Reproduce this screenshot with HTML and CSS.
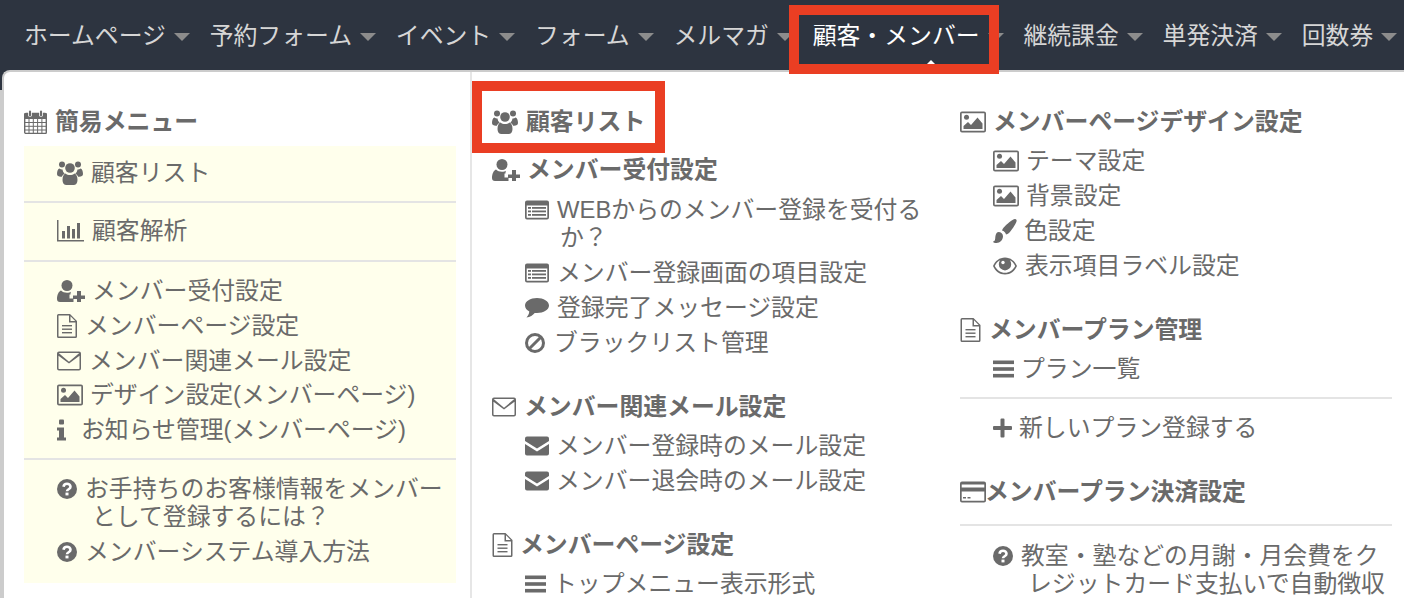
FILE: index.html
```html
<!DOCTYPE html>
<html lang="ja">
<head>
<meta charset="utf-8">
<title>顧客・メンバー</title>
<link rel="stylesheet" href="styles.css">
</head>
<body>
<svg class="sprite" xmlns="http://www.w3.org/2000/svg">
  <symbol id="calendar" viewBox="0 0 23 24"><path d="M2 3.500h19a1.300 1.300 0 0 1 1.300 1.300v17.400a1.300 1.300 0 0 1-1.300 1.300H2A1.300 1.300 0 0 1 .7 22.200V4.800A1.300 1.300 0 0 1 2 3.500z" fill="none" stroke="currentColor" stroke-width="1.400"/><path d="M0 3.500h23v5.500H0z"/><path d="M.7 12.500h21.600M.7 16.300h21.600M.7 20h21.600M5 9v14.500M9.300 9v14.500M13.600 9v14.500M17.900 9v14.500" fill="none" stroke="currentColor" stroke-width="1"/><rect x="4.200" y="0" width="3.600" height="7" rx="1.800" fill="#fff"/><rect x="15.200" y="0" width="3.600" height="7" rx="1.800" fill="#fff"/><rect x="5" y=".5" width="2" height="6" rx="1"/><rect x="16" y=".5" width="2" height="6" rx="1"/></symbol>
  <symbol id="users" viewBox="0 0 26 24"><circle cx="13" cy="7" r="4.800"/><circle cx="5" cy="3.500" r="3"/><circle cx="21" cy="3.500" r="3"/><path d="M0 13c0-3 1-5.500 2.500-5.500 1 .8 2 1.200 3 1 .3 1.800 1 3.200 2.200 4.200-1.300.6-2.300 1.500-2.800 3C2 16 0 15 0 13zM26 13c0-3-1-5.500-2.500-5.500-1 .8-2 1.200-3 1-.3 1.800-1 3.200-2.200 4.200 1.300.6 2.300 1.500 2.800 3 2.900.300 4.900-.700 4.900-2.700z"/><path d="M8.500 12.500c1.200 1 2.800 1.500 4.500 1.500s3.300-.5 4.500-1.500c1.800.5 3 3 3 6.500 0 3-1.500 5-4 5H9.500c-2.500 0-4-2-4-5 0-3.500 1.200-6 3-6.500z"/></symbol>
  <symbol id="chart" viewBox="0 0 27 22"><path d="M0 0h1.500v20H27v1.500H0z"/><rect x="5" y="11" width="3" height="7.500"/><rect x="10" y="6" width="3" height="12.500"/><rect x="15" y="9" width="3" height="9.500"/><rect x="20" y="3" width="3" height="15.500"/></symbol>
  <symbol id="userplus" viewBox="0 0 28 22"><circle cx="10" cy="5.500" r="5.500"/><path d="M4 10.500c1.500 1.500 3.500 2.200 6 2.200 1.500 0 3-.3 4-1-.5 1-.5 2-.5 2.800h-1v4h4V22H3c-2 0-3-1-3-3 0-4 1.500-7.500 4-8.500z"/><path d="M20 11h4v4.500h4v3.500h-4v3h-4v-3h-4v-3.500h4z"/></symbol>
  <symbol id="file" viewBox="0 0 20 24"><path fill-rule="evenodd" d="M1.500 0H13l7 7v15.500a1.500 1.500 0 0 1-1.500 1.500h-17A1.500 1.500 0 0 1 0 22.500v-21A1.500 1.500 0 0 1 1.500 0zm0 1.500v21h17V8.500H12V1.500zm12 .8v4.700h4.700z"/><rect x="5" y="11" width="10" height="1.400"/><rect x="5" y="14.500" width="10" height="1.400"/><rect x="5" y="18" width="10" height="1.400"/></symbol>
  <symbol id="mailo" viewBox="0 0 24 19"><path fill-rule="evenodd" d="M2 0h20a2 2 0 0 1 2 2v15a2 2 0 0 1-2 2H2a2 2 0 0 1-2-2V2a2 2 0 0 1 2-2zM1.500 4.200V17c0 .3.200.5.500.5h20c.3 0 .5-.2.500-.5V4.200L12 12zm.2-2.700L12 10.200 22.300 1.500z"/></symbol>
  <symbol id="picture" viewBox="0 0 26 21"><path fill-rule="evenodd" d="M2 0h22a2 2 0 0 1 2 2v17a2 2 0 0 1-2 2H2a2 2 0 0 1-2-2V2a2 2 0 0 1 2-2zm-.300 1.700v17.600h22.600V1.700z"/><circle cx="6.500" cy="5.800" r="2.500"/><path d="M3.500 17.500v-3l4.500-4 3 3 6.500-7.500 5 6v5.500z"/></symbol>
  <symbol id="info" viewBox="0 0 9 21"><rect x="2" y="0" width="5" height="5" rx="1"/><path d="M0 8h7v10h2v3H0v-3h2v-7H0z"/></symbol>
  <symbol id="question" viewBox="0 0 20 20"><circle cx="10" cy="10" r="10"/><path d="M6.500 7.800c.3-2 1.700-3 3.500-3s3.500 1.100 3.500 2.900c0 2.500-3.500 2.500-3.500 4.500" fill="none" stroke="#fff" stroke-width="2.600"/><rect x="8.500" y="13.600" width="3" height="2.800" fill="#fff"/></symbol>
  <symbol id="listalt" viewBox="0 0 24 19"><path fill-rule="evenodd" d="M2 0h20a2 2 0 0 1 2 2v15a2 2 0 0 1-2 2H2a2 2 0 0 1-2-2V2a2 2 0 0 1 2-2zm-.300 5v12.300h20.600V5z"/><rect x="3" y="6.500" width="3" height="1.800"/><rect x="7" y="6.500" width="14" height="1.800"/><rect x="3" y="10" width="3" height="1.800"/><rect x="7" y="10" width="14" height="1.800"/><rect x="3" y="13.500" width="3" height="1.800"/><rect x="7" y="13.500" width="14" height="1.800"/></symbol>
  <symbol id="comment" viewBox="0 0 24 20"><path d="M12 0c6.600 0 12 3.300 12 7.500S18.600 15 12 15c-.8 0-1.600 0-2.300-.1C8 17 5 19 1.500 19.500c1.300-1.500 2.500-3 2.800-6C1.700 12.200 0 10 0 7.500 0 3.300 5.400 0 12 0z"/></symbol>
  <symbol id="ban" viewBox="0 0 20 20"><circle cx="10" cy="10" r="8.500" fill="none" stroke="currentColor" stroke-width="3"/><path d="M4.500 15.500 15.500 4.500" stroke="currentColor" stroke-width="3"/></symbol>
  <symbol id="mail" viewBox="0 0 24 19"><path d="M2 0h20a2 2 0 0 1 2 2v2.500L12 12 0 4.500V2a2 2 0 0 1 2-2zM0 7.500l12 7.500 12-7.500V17a2 2 0 0 1-2 2H2a2 2 0 0 1-2-2z"/></symbol>
  <symbol id="bars" viewBox="0 0 21 17"><rect width="21" height="3.600"/><rect y="6.700" width="21" height="3.600"/><rect y="13.400" width="21" height="3.600"/></symbol>
  <symbol id="brush" viewBox="0 0 24 24"><path d="M22 0c1.300 0 2 1 1.500 2.500-1 3-5 9-7.500 11.500-1 1-2 1.200-3 1.500-.5-2-2-3.500-4-4 .3-1 .8-2 1.700-3C13 6 19.500 0 22 0z"/><path d="M5.500 13c2.500 0 4.500 1.800 4.500 4.300C10 21 7 24 3.500 24 2 24 0 23.500 0 22.500c1.500-.3 2-1 2.200-3 .2-3.300 1-6.500 3.300-6.500z"/></symbol>
  <symbol id="eye" viewBox="0 0 24 17"><path fill-rule="evenodd" d="M12 0c5.500 0 9.800 3.500 12 8.500-2.200 5-6.500 8.500-12 8.500S2.200 13.500 0 8.500C2.200 3.500 6.500 0 12 0zM7 2.800C4.700 4 3 6 1.800 8.500 4 12.500 7.500 15.300 12 15.300s8-2.800 10.200-6.800C21 6 19.300 4 17 2.800c.8 1.200 1.200 2.500 1.200 3.900a6.200 6.200 0 0 1-12.400 0c0-1.400.4-2.700 1.200-3.900z"/><circle cx="10" cy="5" r="1.700" fill="#fff"/></symbol>
  <symbol id="plus" viewBox="0 0 19 19"><path d="M7.500 1a1 1 0 0 1 1-1h2a1 1 0 0 1 1 1v6.500H18a1 1 0 0 1 1 1v2a1 1 0 0 1-1 1h-6.500V18a1 1 0 0 1-1 1h-2a1 1 0 0 1-1-1v-6.500H1a1 1 0 0 1-1-1v-2a1 1 0 0 1 1-1h6.500z"/></symbol>
  <symbol id="card" viewBox="0 0 26 21"><path fill-rule="evenodd" d="M2 0h22a2 2 0 0 1 2 2v17a2 2 0 0 1-2 2H2a2 2 0 0 1-2-2V2a2 2 0 0 1 2-2zm-.300 10v9.300h22.600V10zM1.700 3v3h22.600V3z"/><rect x="3" y="15.500" width="3" height="1.500"/><rect x="7.500" y="15.500" width="3" height="1.500"/></symbol>
</svg>

<nav class="nav">
  <a class="nav-item">ホームページ<span class="caret"></span></a>
  <a class="nav-item">予約フォーム<span class="caret"></span></a>
  <a class="nav-item">イベント<span class="caret"></span></a>
  <a class="nav-item">フォーム<span class="caret"></span></a>
  <a class="nav-item">メルマガ<span class="caret"></span></a>
  <a class="nav-item is-active">顧客・メンバー<span class="caret"></span><span class="pointer"></span></a>
  <a class="nav-item">継続課金<span class="caret"></span></a>
  <a class="nav-item">単発決済<span class="caret"></span></a>
  <a class="nav-item">回数券<span class="caret"></span></a>
</nav>

<div class="highlight highlight-nav"></div>
<div class="highlight highlight-list"></div>

<main class="panel">
  <section class="col col-1">
    <h3 class="head"><svg class="ic w23"><use href="#calendar"/></svg>簡易メニュー</h3>
    <div class="easy">
      <ul class="group group-first">
        <li class="item"><svg class="ic w26"><use href="#users"/></svg>顧客リスト</li>
      </ul>
      <ul class="group group-single">
        <li class="item"><svg class="ic w27"><use href="#chart"/></svg>顧客解析</li>
      </ul>
      <ul class="group">
        <li class="item"><svg class="ic w28"><use href="#userplus"/></svg>メンバー受付設定</li>
        <li class="item"><svg class="ic w20"><use href="#file"/></svg>メンバーページ設定</li>
        <li class="item"><svg class="ic w24"><use href="#mailo"/></svg>メンバー関連メール設定</li>
        <li class="item"><svg class="ic w26 pic"><use href="#picture"/></svg>デザイン設定(メンバーページ)</li>
        <li class="item"><svg class="ic w9"><use href="#info"/></svg>お知らせ管理(メンバーページ)</li>
      </ul>
      <ul class="group group-last">
        <li class="item"><svg class="ic w20"><use href="#question"/></svg>お手持ちのお客様情報をメンバーとして登録するには？</li>
        <li class="item"><svg class="ic w20"><use href="#question"/></svg>メンバーシステム導入方法</li>
      </ul>
    </div>
  </section>

  <section class="col col-2">
    <h3 class="head head-list"><svg class="ic w26"><use href="#users"/></svg>顧客リスト</h3>
    <div class="block block-tight">
      <h3 class="head"><svg class="ic w28"><use href="#userplus"/></svg>メンバー受付設定</h3>
      <ul class="sub">
        <li class="item"><svg class="ic w24"><use href="#listalt"/></svg>WEBからのメンバー登録を受付るか？</li>
        <li class="item"><svg class="ic w24"><use href="#listalt"/></svg>メンバー登録画面の項目設定</li>
        <li class="item"><svg class="ic w24"><use href="#comment"/></svg>登録完了メッセージ設定</li>
        <li class="item"><svg class="ic w20 ban"><use href="#ban"/></svg>ブラックリスト管理</li>
      </ul>
    </div>
    <div class="block">
      <h3 class="head"><svg class="ic w24"><use href="#mailo"/></svg>メンバー関連メール設定</h3>
      <ul class="sub">
        <li class="item"><svg class="ic w24 snug"><use href="#mail"/></svg>メンバー登録時のメール設定</li>
        <li class="item"><svg class="ic w24 snug"><use href="#mail"/></svg>メンバー退会時のメール設定</li>
      </ul>
    </div>
    <div class="block">
      <h3 class="head"><svg class="ic w21 snug"><use href="#file"/></svg>メンバーページ設定</h3>
      <ul class="sub">
        <li class="item"><svg class="ic w21 snug"><use href="#bars"/></svg>トップメニュー表示形式</li>
      </ul>
    </div>
  </section>

  <section class="col col-3">
    <div class="block block-first">
      <h3 class="head"><svg class="ic w26 pic"><use href="#picture"/></svg>メンバーページデザイン設定</h3>
      <ul class="sub">
        <li class="item"><svg class="ic w26 pic"><use href="#picture"/></svg>テーマ設定</li>
        <li class="item"><svg class="ic w26 pic"><use href="#picture"/></svg>背景設定</li>
        <li class="item"><svg class="ic w24 snug"><use href="#brush"/></svg>色設定</li>
        <li class="item"><svg class="ic w24"><use href="#eye"/></svg>表示項目ラベル設定</li>
      </ul>
    </div>
    <div class="block">
      <h3 class="head"><svg class="ic w21"><use href="#file"/></svg>メンバープラン管理</h3>
      <ul class="sub">
        <li class="item"><svg class="ic w21 snug"><use href="#bars"/></svg>プラン一覧</li>
      </ul>
      <ul class="sub sub-ruled">
        <li class="item"><svg class="ic w19 snug"><use href="#plus"/></svg>新しいプラン登録する</li>
      </ul>
    </div>
    <div class="block">
      <h3 class="head head-flush"><svg class="ic w26"><use href="#card"/></svg>メンバープラン決済設定</h3>
      <ul class="sub sub-ruled sub-ruled-head">
        <li class="item"><svg class="ic w20"><use href="#question"/></svg>教室・塾などの月謝・月会費をクレジットカード支払いで自動徴収</li>
      </ul>
    </div>
  </section>
</main>
</body>
</html>
```

FILE: styles.css
```css
* { box-sizing: border-box; }

html, body { height: 598px; }

body {
  margin: 0;
  overflow: hidden;
  position: relative;
  background: #ccc;
  color: #6a6a6a;
  font-family: "Liberation Sans", "Noto Sans CJK JP", sans-serif;
  font-size: 23.85px;
  line-height: 28px;
}

.sprite { display: none; }

.nav {
  display: flex;
  height: 90px;
  padding: 22px 0 0 24px;
  background: #2d3440;
  color: #d6d6d6;
  white-space: nowrap;
}

.nav-item {
  position: relative;
  display: block;
  padding-right: 19.8px;
}

.nav-item.is-active { color: #fff; }

.caret {
  display: inline-block;
  width: 0;
  height: 0;
  margin-left: 8px;
  vertical-align: 3px;
  border-style: solid;
  border-width: 8px 8px 0;
  border-color: #8c8c8c transparent transparent;
}

.pointer {
  position: absolute;
  left: 114px;
  top: 38px;
  width: 0;
  height: 0;
  border-style: solid;
  border-width: 0 4px 4px;
  border-color: transparent transparent #fff;
}

.highlight {
  position: absolute;
  z-index: 2;
  border: 10px solid #ea3e23;
}

.highlight-nav { left: 789px; top: 5px; width: 210px; height: 69px; }
.highlight-list { left: 472px; top: 81px; width: 193px; height: 72px; }

.panel {
  position: relative;
  display: grid;
  grid-template-columns: 466px 488px 1fr;
  height: 528px;
  margin: -20px 0 0 2px;
  padding-top: 36px;
  overflow: hidden;
  background: #fff;
  border-top: 2px solid #ccc;
  border-left: 2px solid #ccc;
  border-top-left-radius: 8px;
}

.col-1 { padding: 0 14px 0 20px; }
.col-2 { padding: 36px 26px 0 20px; border-left: 2px solid #e6e6e6; margin-top: -36px; }
.col-3 { padding: 0 12px 0 2px; }

.head {
  margin: 0;
  font-size: inherit;
  font-weight: 700;
  line-height: 28px;
}

.ic {
  display: inline-block;
  height: 24px;
  margin-right: 8px;
  vertical-align: -4px;
  fill: currentColor;
  text-indent: 0;
}

.w9 { width: 9px; margin-right: 15px; }
.w19 { width: 19px; }
.w20 { width: 20px; }
.w21 { width: 21px; }
.w23 { width: 23px; }
.w24 { width: 24px; }
.w26 { width: 26px; }
.w27 { width: 27px; }
.w28 { width: 28px; margin-right: 7px; }

.pic, .snug { margin-right: 7px; }
.ban { margin-right: 9px; }
.head-flush .ic { margin-right: -1px; }

.easy {
  margin-top: 10px;
  background: #ffffec;
}

.group {
  margin: 0;
  padding: 15px 0 14px 33px;
  list-style: none;
  border-bottom: 2px solid #e4e4e4;
}

.group-first { padding-top: 13px; }
.group-single { padding-top: 14px; padding-bottom: 15px; }
.group-last { padding-bottom: 17px; border-bottom: 0; }

.item {
  padding-left: 35px;
  text-indent: -35px;
}

.item + .item { margin-top: 7px; }
.group .item + .item { margin-top: 6.75px; }

.sub {
  margin: 11px 0 0;
  padding: 0 0 0 33px;
  list-style: none;
}

.block-tight .sub { margin-top: 12px; }

.sub-ruled {
  margin-top: 14px;
  padding-top: 15px;
  border-top: 2px solid #e4e4e4;
}

.sub-ruled-head { margin-top: 18px; padding-top: 16px; }

.block { margin-top: 36px; }
.block-tight { margin-top: 20px; }
.block-first { margin-top: 0; }
```
